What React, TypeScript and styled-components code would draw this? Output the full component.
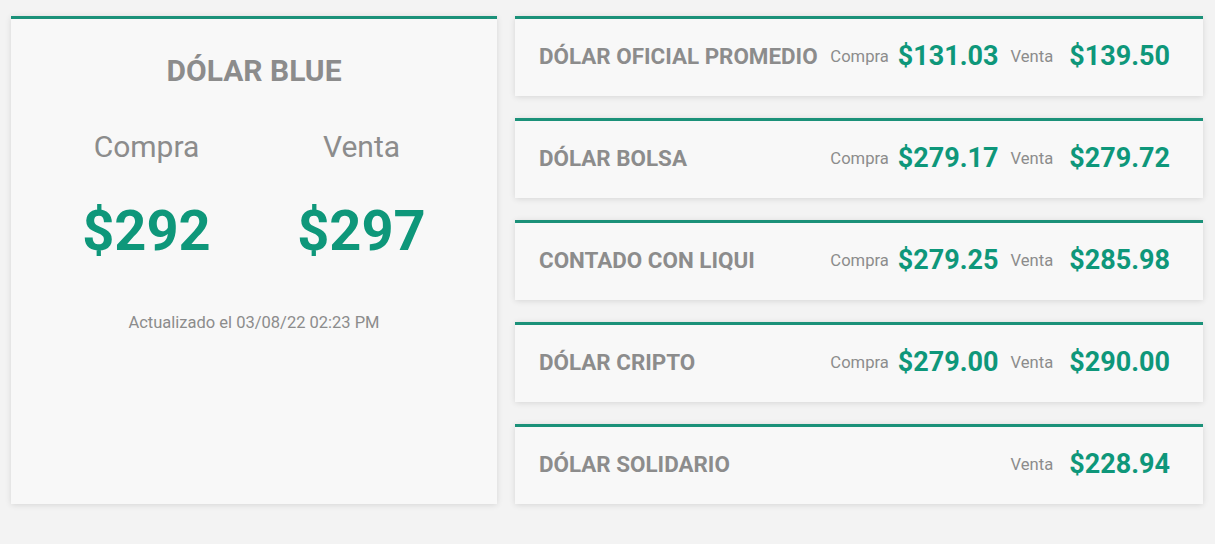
//Fundamentals
import React from "react";
import styled, { createGlobalStyle } from "styled-components";

//~~~~~~~~~~~~~~~~~~~Interfaces & Types
interface Quote {
  name: string;
  buy?: string;
  sell: string;
}

//~~~~~~~~~~~~~~~~~~~Data
const quotes: Quote[] = [
  { name: "DÓLAR OFICIAL PROMEDIO", buy: "$131.03", sell: "$139.50" },
  { name: "DÓLAR BOLSA", buy: "$279.17", sell: "$279.72" },
  { name: "CONTADO CON LIQUI", buy: "$279.25", sell: "$285.98" },
  { name: "DÓLAR CRIPTO", buy: "$279.00", sell: "$290.00" },
  { name: "DÓLAR SOLIDARIO", sell: "$228.94" },
];

//~~~~~~~~~~~~~~~~~~~Styled Components
const GlobalStyle = createGlobalStyle`
  * {
    box-sizing: border-box;
  }
  body {
    margin: 0;
    background-color: #f3f3f3;
    font-family: Roboto, "Liberation Sans", sans-serif;
  }
`;

const Page = styled.main`
  display: grid;
  grid-template-columns: 486px 1fr;
  gap: 18px;
  padding: 16px 12px 40px 11px;
  height: 544px;
`;

const Card = styled.section`
  background-color: #f8f8f8;
  border-top: 3px solid #1b9179;
  box-shadow: 0 1px 6px rgba(0, 0, 0, 0.12);
`;

const MainCard = styled(Card)`
  display: flex;
  flex-direction: column;
  align-items: center;
  padding: 34px 28px 0;
  color: #8c8c8c;

  & > h2 {
    margin: 0;
    font-size: 30px;
    font-weight: 700;
  }
`;

const Columns = styled.div`
  width: 100%;
  display: grid;
  grid-template-columns: 1fr 1fr;
  margin-top: 39px;
  text-align: center;
`;

const ColumnLabel = styled.h3`
  margin: 0;
  font-size: 30px;
  font-weight: 400;
  line-height: 40px;
  color: #8c8c8c;
`;

const BigValue = styled.p`
  margin: 26px 0 0;
  font-size: 56px;
  font-weight: 700;
  line-height: 76px;
  color: #0e977a;
`;

const Updated = styled.p`
  margin: 44px 0 0;
  font-size: 16.5px;
  color: #8c8c8c;
`;

const List = styled.div`
  display: flex;
  flex-direction: column;
  gap: 22px;
`;

const Row = styled(Card)`
  flex: 1;
  display: flex;
  align-items: center;
  padding: 0 33px 3px 24px;

  & > h2 {
    flex: 1;
    margin: 0;
    font-size: 22.4px;
    font-weight: 700;
    color: #8c8c8c;
    white-space: nowrap;
  }
`;

const Label = styled.span<{ $space: number }>`
  font-size: 16.6px;
  color: #8c8c8c;
  margin-right: ${({ $space }) => $space}px;
`;

const Value = styled.span<{ $space?: number }>`
  font-size: 27px;
  font-weight: 700;
  color: #0e977a;
  margin-right: ${({ $space }) => $space ?? 0}px;
`;

//~~~~~~~~~~~~~~~~~~~Component
const App = (): JSX.Element => {
  //~~~~~~~~~~~~~~~~~~~Render
  return (
    <>
      <GlobalStyle />
      <Page>
        <MainCard>
          <h2>DÓLAR BLUE</h2>
          <Columns>
            <div>
              <ColumnLabel>Compra</ColumnLabel>
              <BigValue>$292</BigValue>
            </div>
            <div>
              <ColumnLabel>Venta</ColumnLabel>
              <BigValue>$297</BigValue>
            </div>
          </Columns>
          <Updated>Actualizado el 03/08/22 02:23 PM</Updated>
        </MainCard>
        <List>
          {quotes.map((quote) => (
            <Row key={quote.name}>
              <h2>{quote.name}</h2>
              {quote.buy && (
                <>
                  <Label $space={9}>Compra</Label>
                  <Value $space={12}>{quote.buy}</Value>
                </>
              )}
              <Label $space={16}>Venta</Label>
              <Value>{quote.sell}</Value>
            </Row>
          ))}
        </List>
      </Page>
    </>
  );
};

export default App;
